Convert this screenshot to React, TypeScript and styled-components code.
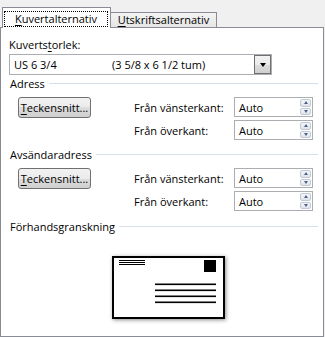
import React from 'react';
import styled, { createGlobalStyle } from 'styled-components';

const Global = createGlobalStyle`
  html, body { margin: 0; padding: 0; background: #f0f0f0; }
  body {
    font-family: "Open Sans", "Noto Sans", sans-serif;
    font-size: 11px;
    color: #000;
  }
  u { text-decoration: underline; text-underline-offset: 2px; }
`;

const Window = styled.div`
  width: 325px;
  height: 337px;
  box-sizing: border-box;
  padding-top: 7px;
  background: #f0f0f0;
  display: flex;
  flex-direction: column;
`;

const TabStrip = styled.div`
  display: flex;
  align-items: flex-end;
  padding-left: 2px;
  position: relative;
  z-index: 1;
  margin-bottom: -1px;
`;

const Tab = styled.div<{ $active?: boolean }>`
  box-sizing: border-box;
  height: ${p => (p.$active ? 21 : 16)}px;
  width: ${p => (p.$active ? 109 : 107)}px;
  margin-left: ${p => (p.$active ? 0 : -1)}px;
  border: 1px solid #898c95;
  border-bottom: ${p => (p.$active ? 'none' : '1px solid #898c95')};
  background: ${p => (p.$active ? '#ffffff' : 'linear-gradient(#f3f3f3, #e6e6e6)')};
  padding: ${p => (p.$active ? '3px 2px 0 1px' : '0')};
  display: flex;
  align-items: ${p => (p.$active ? 'flex-start' : 'center')};
  justify-content: center;
  line-height: 14px;
`;

const FocusRect = styled.div`
  box-sizing: border-box;
  width: 104px;
  height: 16px;
  border: 1px dotted #000;
  display: flex;
  align-items: center;
  justify-content: center;
`;

const Panel = styled.div`
  flex: 1;
  margin-right: 1px;
  background: #fff;
  border: 1px solid #898c95;
  padding: 9px 5px 0 8px;
  display: flex;
  flex-direction: column;
`;

const Label = styled.div`
  line-height: 15px;
  height: 15px;
`;

const Select = styled.div`
  box-sizing: border-box;
  margin-top: 2px;
  width: 263px;
  height: 21px;
  border: 1px solid #abadb3;
  display: flex;
  align-items: center;
  padding-left: 4px;
`;

const SelectName = styled.span`
  width: 98px;
`;

const SelectDims = styled.span`
  flex: 1;
`;

const DropButton = styled.div`
  box-sizing: border-box;
  width: 17px;
  height: 19px;
  border: 1px solid #707070;
  background: linear-gradient(#f2f2f2, #ebebeb 50%, #dddddd 50%, #cfcfcf);
  display: flex;
  align-items: center;
  justify-content: center;
`;

const DownTriangle = styled.span`
  width: 0;
  height: 0;
  border-left: 3.5px solid transparent;
  border-right: 3.5px solid transparent;
  border-top: 4px solid #000;
`;

const SectionHeader = styled.div<{ $gap: number }>`
  margin-top: ${p => p.$gap}px;
  display: flex;
  align-items: center;
  gap: 4px;
  line-height: 15px;
  height: 15px;
  padding-left: 1px;
`;

const Rule = styled.div`
  flex: 1;
  height: 1px;
  background: #d5dfe5;
`;

const SectionBody = styled.div`
  margin-top: 6px;
  padding-left: 9px;
  display: flex;
  align-items: flex-start;
`;

const Button = styled.div`
  box-sizing: border-box;
  width: 73px;
  height: 21px;
  border: 1px solid #707070;
  border-radius: 3px;
  background: linear-gradient(#f2f2f2, #ebebeb 50%, #dddddd 50%, #cfcfcf);
  display: flex;
  align-items: center;
  justify-content: center;
  padding-bottom: 1px;
`;

const FieldGrid = styled.div`
  margin-left: 43px;
  display: grid;
  grid-template-columns: 100px 79px;
  row-gap: 3px;
  align-items: center;
`;

const SpinBox = styled.div`
  box-sizing: border-box;
  height: 20px;
  border: 1px solid #abadb3;
  display: flex;
  align-items: center;
  justify-content: space-between;
  padding: 1px 1px 1px 4px;
`;

const SpinButtons = styled.div`
  display: flex;
  flex-direction: column;
  gap: 1px;
  width: 11px;
  height: 16px;
`;

const SpinButton = styled.div`
  flex: 1;
  box-sizing: border-box;
  border: 1px solid #c3cad4;
  border-radius: 2px;
  background: linear-gradient(#f4f6f9, #dfe4ea);
  display: flex;
  align-items: center;
  justify-content: center;
`;

const Arrow = styled.span<{ $up?: boolean }>`
  width: 0;
  height: 0;
  border-left: 2.5px solid transparent;
  border-right: 2.5px solid transparent;
  ${p => (p.$up ? 'border-bottom: 3px solid #4d6185;' : 'border-top: 3px solid #4d6185;')}
`;

const PreviewArea = styled.div`
  margin-top: 22px;
  padding-left: 9px;
  display: flex;
  justify-content: center;
`;

const EnvelopeFrame = styled.div`
  width: 113px;
  height: 63px;
  box-shadow: 1px 1px 4px rgba(0, 0, 0, 0.45);
  background: #fff;
  line-height: 0;
`;

const Spin = () => (
  <SpinBox>
    <span>Auto</span>
    <SpinButtons>
      <SpinButton><Arrow $up /></SpinButton>
      <SpinButton><Arrow /></SpinButton>
    </SpinButtons>
  </SpinBox>
);

const AddressSection = ({ title, gap }: { title: string; gap: number }) => (
  <>
    <SectionHeader $gap={gap}>
      <span>{title}</span>
      <Rule />
    </SectionHeader>
    <SectionBody>
      <Button><span><u>T</u>eckensnitt...</span></Button>
      <FieldGrid>
        <span>Från vänsterkant:</span>
        <Spin />
        <span>Från överkant:</span>
        <Spin />
      </FieldGrid>
    </SectionBody>
  </>
);

const Envelope = () => (
  <EnvelopeFrame>
    <svg width="113" height="63" viewBox="0 0 113 63">
      <rect x="1" y="1" width="111" height="61" fill="#fff" stroke="#000" strokeWidth="2" />
      <rect x="7" y="4" width="26" height="1" fill="#000" />
      <rect x="7" y="6" width="26" height="1" fill="#000" />
      <rect x="7" y="8" width="26" height="1" fill="#000" />
      <rect x="92" y="4" width="12" height="12" fill="#000" />
      <rect x="43" y="27.5" width="61" height="1.6" fill="#000" />
      <rect x="43" y="33.5" width="61" height="1.6" fill="#000" />
      <rect x="43" y="39.5" width="61" height="1.6" fill="#000" />
      <rect x="43" y="45.5" width="61" height="1.6" fill="#000" />
    </svg>
  </EnvelopeFrame>
);

export default function App() {
  return (
    <Window>
      <Global />
      <TabStrip>
        <Tab $active>
          <FocusRect><span><u>K</u>uvertalternativ</span></FocusRect>
        </Tab>
        <Tab><span><u>U</u>tskriftsalternativ</span></Tab>
      </TabStrip>
      <Panel>
        <Label>Kuverts<u>t</u>orlek:</Label>
        <Select>
          <SelectName>US 6 3/4</SelectName>
          <SelectDims>(3 5/8 x 6 1/2 tum)</SelectDims>
          <DropButton><DownTriangle /></DropButton>
        </Select>
        <AddressSection title="Adress" gap={1} />
        <AddressSection title="Avsändaradress" gap={7} />
        <SectionHeader $gap={8}>
          <span>Förhandsgranskning</span>
          <Rule />
        </SectionHeader>
        <PreviewArea>
          <Envelope />
        </PreviewArea>
      </Panel>
    </Window>
  );
}
